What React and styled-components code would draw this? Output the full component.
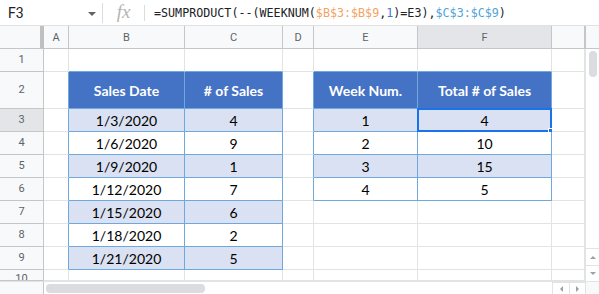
import React from 'react';
import styled, { createGlobalStyle } from 'styled-components';

const Global = createGlobalStyle`
  html, body { margin: 0; padding: 0; background: #fff; }
  body { width: 599px; height: 294px; overflow: hidden; font-family: Roboto, "Liberation Sans", Arial, sans-serif; }
  * { box-sizing: border-box; }
`;

const GRID = '#e2e3e3';
const HEAD_LINE = '#c4c7c5';
const BLUE_LINE = '#6fa8dc';

const Frame = styled.div`
  width: 599px;
  height: 294px;
  display: flex;
  flex-direction: column;
  overflow: hidden;
`;

const FormulaBar = styled.div`
  height: 26px;
  flex: none;
  display: flex;
  align-items: center;
  border-bottom: 1px solid #e1e1e1;
`;

const NameBox = styled.div`
  width: 102px;
  height: 100%;
  display: flex;
  align-items: center;
  justify-content: space-between;
  padding: 0 6px 0 8px;
  font-size: 14px;
  color: #202124;
`;

const Caret = styled.span`
  width: 0;
  height: 0;
  border-left: 4px solid transparent;
  border-right: 4px solid transparent;
  border-top: 4px solid #5f6368;
  margin-top: 2px;
`;

const Divider = styled.div`
  width: 1px;
  height: ${p => p.$h}px;
  background: #dadce0;
  flex: none;
`;

const Fx = styled.div`
  width: 41px;
  display: flex;
  justify-content: center;
  font-family: "Liberation Serif", "DejaVu Serif", serif;
  font-style: italic;
  font-size: 19px;
  color: #b4b4b4;
  line-height: 1;
  padding-bottom: 2px;
`;

const Formula = styled.div`
  padding-left: 9px;
  font-family: "DejaVu Sans Mono", "Liberation Mono", monospace;
  font-size: 11.7px;
  color: #202124;
  white-space: nowrap;
`;

const Tok = styled.span`
  color: ${p => p.$c};
`;

const Body = styled.div`
  display: flex;
  flex: none;
  height: 255px;
`;

const Grid = styled.div`
  display: grid;
  grid-template-columns: 44px 25px 116px 98px 31px 104px 134px 33px;
  grid-template-rows: 23px 23px 37px repeat(7, 23px) 11px;
  width: 585px;
  overflow: hidden;
`;

const Corner = styled.div`
  background: #f8f9fa;
  border-right: 4px solid #c0c0c0;
  border-bottom: 1px solid ${HEAD_LINE};
`;

const ColHead = styled.div`
  background: ${p => (p.$sel ? '#e3e5e8' : '#f8f9fa')};
  border-right: 1px solid ${HEAD_LINE};
  border-bottom: 1px solid ${HEAD_LINE};
  display: flex;
  align-items: center;
  justify-content: center;
  font-size: 11px;
  color: #5f6368;
`;

const RowHead = styled.div`
  background: ${p => (p.$sel ? '#e3e5e8' : '#f8f9fa')};
  border-right: 1px solid ${HEAD_LINE};
  border-bottom: 1px solid ${HEAD_LINE};
  display: flex;
  align-items: ${p => (p.$clip ? 'flex-start' : 'center')};
  padding-top: ${p => (p.$clip ? '3px' : '0')};
  justify-content: center;
  font-size: 11px;
  line-height: 12px;
  color: #5f6368;
  overflow: hidden;
`;

const fills = { head: '#4472c4', band: '#d9e1f2', plain: '#ffffff' };

const Cell = styled.div`
  position: relative;
  background: ${p => fills[p.$fill]};
  border-right: 1px solid ${p => (p.$br ? BLUE_LINE : GRID)};
  border-bottom: 1px solid ${p => (p.$bb ? BLUE_LINE : GRID)};
  display: flex;
  align-items: center;
  justify-content: center;
  font-family: Lato, "Open Sans", sans-serif;
  font-size: 14px;
  font-weight: ${p => (p.$fill === 'head' ? 700 : 400)};
  color: ${p => (p.$fill === 'head' ? '#ffffff' : '#000000')};
  white-space: nowrap;
  padding-top: 1px;
`;

const Selection = styled.div`
  position: absolute;
  left: -1px;
  top: -1px;
  right: -1px;
  bottom: -1px;
  border: 2px solid #1a73e8;
  pointer-events: none;
`;

const Handle = styled.div`
  position: absolute;
  right: -5px;
  bottom: -5px;
  width: 7px;
  height: 7px;
  background: #1a73e8;
  border: 1px solid #fff;
`;

const VScroll = styled.div`
  width: 14px;
  display: flex;
  flex-direction: column;
`;

const VScrollHead = styled.div`
  height: 23px;
  background: #f8f9fa;
  border-bottom: 1px solid ${HEAD_LINE};
  border-left: 1px solid ${HEAD_LINE};
`;

const VTrack = styled.div`
  flex: 1;
  border-left: 1px solid ${GRID};
  padding: 2px 2px 0 3px;
`;

const Thumb = styled.div`
  background: #dadce0;
  border-radius: 4px;
  width: ${p => p.$w}px;
  height: ${p => p.$h}px;
`;

const ArrowBox = styled.div`
  height: ${p => p.$h}px;
  width: ${p => p.$w}px;
  display: flex;
  align-items: center;
  justify-content: center;
  border-left: 1px solid ${GRID};
  border-top: 1px solid ${GRID};
  background: #fff;
`;

const Tri = styled.span`
  width: 0;
  height: 0;
  ${p =>
    p.$dir === 'up'
      ? `border-left:3px solid transparent;border-right:3px solid transparent;border-bottom:3px solid #9aa0a6;`
      : p.$dir === 'down'
      ? `border-left:3px solid transparent;border-right:3px solid transparent;border-top:3px solid #9aa0a6;`
      : p.$dir === 'left'
      ? `border-top:3px solid transparent;border-bottom:3px solid transparent;border-right:3px solid #9aa0a6;`
      : `border-top:3px solid transparent;border-bottom:3px solid transparent;border-left:3px solid #9aa0a6;`}
`;

const HScroll = styled.div`
  height: 13px;
  flex: none;
  display: flex;
  border-top: 1px solid ${GRID};
`;

const HLeft = styled.div`
  width: 44px;
  background: #f8f9fa;
  border-right: 1px solid ${HEAD_LINE};
`;

const HTrack = styled.div`
  flex: 1;
  display: flex;
  align-items: center;
  padding-left: 2px;
`;

const HCorner = styled.div`
  width: 14px;
  background: #f8f9fa;
  border-left: 1px solid ${GRID};
`;

const cols = ['A', 'B', 'C', 'D', 'E', 'F', ''];

const table1 = [
  ['Sales Date', '# of Sales'],
  ['1/3/2020', '4'],
  ['1/6/2020', '9'],
  ['1/9/2020', '1'],
  ['1/12/2020', '7'],
  ['1/15/2020', '6'],
  ['1/18/2020', '2'],
  ['1/21/2020', '5'],
];

const table2 = [
  ['Week Num.', 'Total # of Sales'],
  ['1', '4'],
  ['2', '10'],
  ['3', '15'],
  ['4', '5'],
];

function inT1(r, c) {
  return r >= 2 && r <= 9 && (c === 1 || c === 2);
}
function inT2(r, c) {
  return r >= 2 && r <= 6 && (c === 4 || c === 5);
}
function inTable(r, c) {
  return inT1(r, c) || inT2(r, c);
}
function valueAt(r, c) {
  if (inT1(r, c)) return table1[r - 2][c - 1];
  if (inT2(r, c)) return table2[r - 2][c - 4];
  return '';
}

export default function App() {
  const rows = [];
  for (let r = 1; r <= 10; r++) {
    rows.push(
      <RowHead key={`rh${r}`} $sel={r === 3} $clip={r === 10}>
        {r}
      </RowHead>
    );
    cols.forEach((_, c) => {
      const t = inTable(r, c);
      const fill = t ? (r === 2 ? 'head' : r % 2 === 1 ? 'band' : 'plain') : 'plain';
      const br = t || inTable(r, c + 1);
      const bb = t || inTable(r + 1, c);
      const sel = r === 3 && c === 5;
      rows.push(
        <Cell key={`c${r}-${c}`} $fill={fill} $br={br} $bb={bb}>
          {valueAt(r, c)}
          {sel && (
            <Selection>
              <Handle />
            </Selection>
          )}
        </Cell>
      );
    });
  }

  return (
    <Frame>
      <Global />
      <FormulaBar>
        <NameBox>
          <span>F3</span>
          <Caret />
        </NameBox>
        <Divider $h={20} />
        <Fx>fx</Fx>
        <Divider $h={16} />
        <Formula>
          =SUMPRODUCT(--(WEEKNUM(<Tok $c="#f4a261">$B$3:$B$9</Tok>,<Tok $c="#3c78d8">1</Tok>)=E3),
          <Tok $c="#4fa3d9">$C$3:$C$9</Tok>)
        </Formula>
      </FormulaBar>
      <Body>
        <Grid>
          <Corner />
          {cols.map((l, i) => (
            <ColHead key={`h${i}`} $sel={i === 5}>
              {l}
            </ColHead>
          ))}
          {rows}
        </Grid>
        <VScroll>
          <VScrollHead />
          <VTrack>
            <Thumb $w={8} $h={26} />
          </VTrack>
          <ArrowBox $h={17} $w={14}>
            <Tri $dir="up" />
          </ArrowBox>
          <ArrowBox $h={16} $w={14}>
            <Tri $dir="down" />
          </ArrowBox>
        </VScroll>
      </Body>
      <HScroll>
        <HLeft />
        <HTrack>
          <Thumb $w={159} $h={9} />
        </HTrack>
        <ArrowBox $h={12} $w={17}>
          <Tri $dir="left" />
        </ArrowBox>
        <ArrowBox $h={12} $w={16}>
          <Tri $dir="right" />
        </ArrowBox>
        <HCorner />
      </HScroll>
    </Frame>
  );
}
